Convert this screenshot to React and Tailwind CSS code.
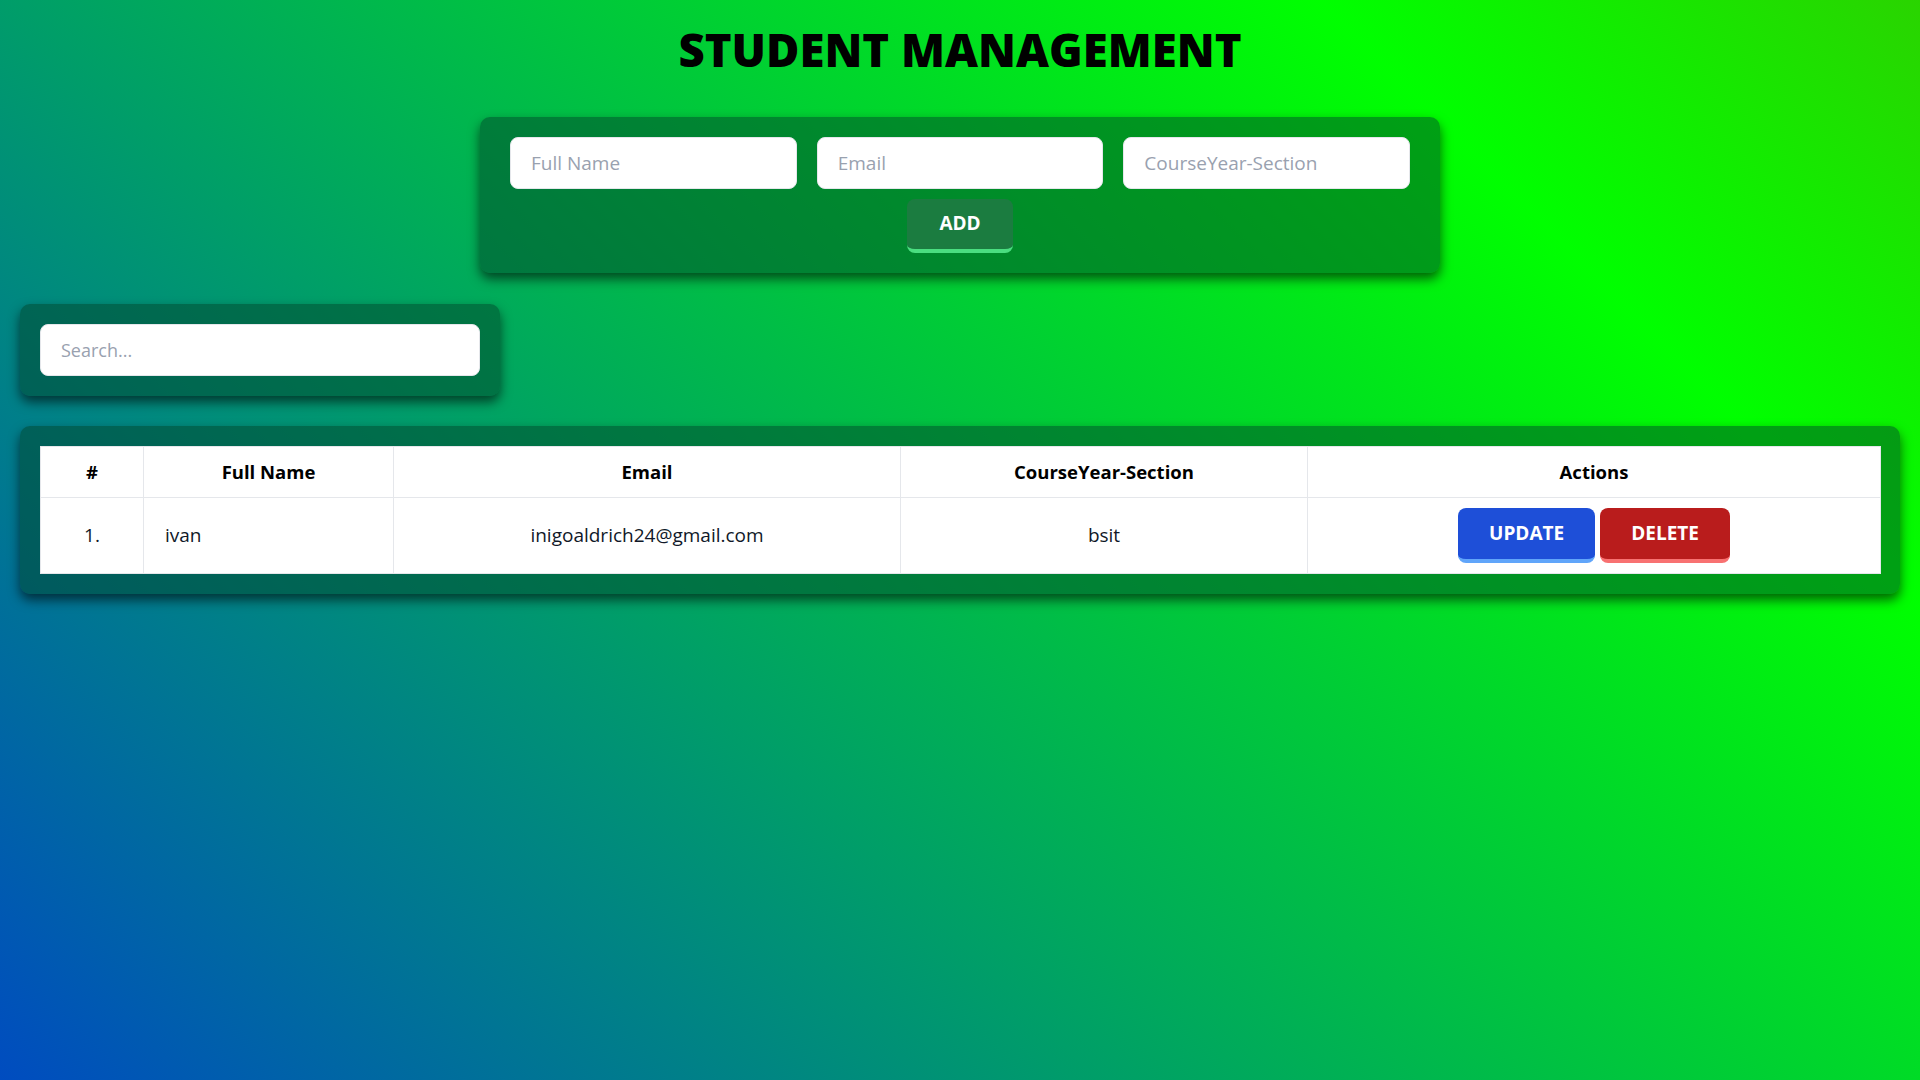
import React from "react";

const students = [
  { id: 1, name: "ivan", email: "inigoaldrich24@gmail.com", course: "bsit" },
];

export default function App() {
  return (
    <div className="min-h-screen w-full bg-[linear-gradient(45deg,#004cc0_0%,#00ff00_80%,#2ad400_100%)] font-['Open_Sans',sans-serif] pt-[27px]">
      <h1 className="text-center text-[45.5px] leading-none font-extrabold text-black">
        STUDENT MANAGEMENT
      </h1>

      <div className="mx-auto mt-[44px] w-[960px] rounded-[10px] bg-[rgba(0,66,40,0.5)] px-[30px] pt-[20px] pb-[20px] shadow-[0_6px_12px_rgba(0,0,0,0.6)]">
        <div className="flex gap-[20px]">
          <input
            className="h-[52px] flex-1 min-w-0 rounded-lg border border-gray-200 bg-white px-5 text-[19px] text-gray-900 placeholder:text-gray-400 outline-none"
            placeholder="Full Name"
          />
          <input
            className="h-[52px] flex-1 min-w-0 rounded-lg border border-gray-200 bg-white px-5 text-[19px] text-gray-900 placeholder:text-gray-400 outline-none"
            placeholder="Email"
          />
          <input
            className="h-[52px] flex-1 min-w-0 rounded-lg border border-gray-200 bg-white px-5 text-[19px] text-gray-900 placeholder:text-gray-400 outline-none"
            placeholder="CourseYear-Section"
          />
        </div>
        <div className="mt-[10px] flex justify-center">
          <button className="h-[54px] rounded-lg border-b-4 border-[#4ade80] bg-[#1b7c40] px-8 text-[19px] font-bold text-white">
            ADD
          </button>
        </div>
      </div>

      <div className="ml-[20px] mt-[31px] w-[480px] rounded-[10px] bg-[rgba(0,66,40,0.5)] p-[20px] shadow-[0_6px_12px_rgba(0,0,0,0.6)]">
        <input
          className="h-[52px] w-full rounded-lg border border-gray-200 bg-white px-5 text-[18px] text-gray-900 placeholder:text-gray-400 outline-none"
          placeholder="Search..."
        />
      </div>

      <div className="mx-[20px] mt-[30px] rounded-[10px] bg-[rgba(0,66,40,0.5)] p-[20px] shadow-[0_6px_12px_rgba(0,0,0,0.6)]">
        <table className="w-full table-fixed border-collapse bg-white text-[19px]">
          <colgroup>
            <col className="w-[103px]" />
            <col className="w-[250px]" />
            <col className="w-[507px]" />
            <col className="w-[407px]" />
            <col className="w-[573px]" />
          </colgroup>
          <thead>
            <tr className="h-[51px]">
              <th className="border border-gray-200 text-center text-[18.5px] font-bold text-black">#</th>
              <th className="border border-gray-200 text-center text-[18.5px] font-bold text-black">Full Name</th>
              <th className="border border-gray-200 text-center text-[18.5px] font-bold text-black">Email</th>
              <th className="border border-gray-200 text-center text-[18.5px] font-bold text-black">CourseYear-Section</th>
              <th className="border border-gray-200 text-center text-[18.5px] font-bold text-black">Actions</th>
            </tr>
          </thead>
          <tbody>
            {students.map((s, i) => (
              <tr key={s.id} className="h-[76px]">
                <td className="border border-gray-200 text-center text-gray-900">{i + 1}.</td>
                <td className="border border-gray-200 px-[21px] text-left text-gray-900">{s.name}</td>
                <td className="border border-gray-200 text-center text-gray-900">{s.email}</td>
                <td className="border border-gray-200 text-center text-gray-900">{s.course}</td>
                <td className="border border-gray-200 text-center">
                  <div className="flex justify-center gap-[5px]">
                    <button className="h-[55px] rounded-lg border-b-4 border-[#60a5fa] bg-[#1e4fd8] px-[31px] text-[19px] font-bold text-white">
                      UPDATE
                    </button>
                    <button className="h-[55px] rounded-lg border-b-4 border-[#f87171] bg-[#b91c1c] px-[31px] text-[19px] font-bold text-white">
                      DELETE
                    </button>
                  </div>
                </td>
              </tr>
            ))}
          </tbody>
        </table>
      </div>
    </div>
  );
}
